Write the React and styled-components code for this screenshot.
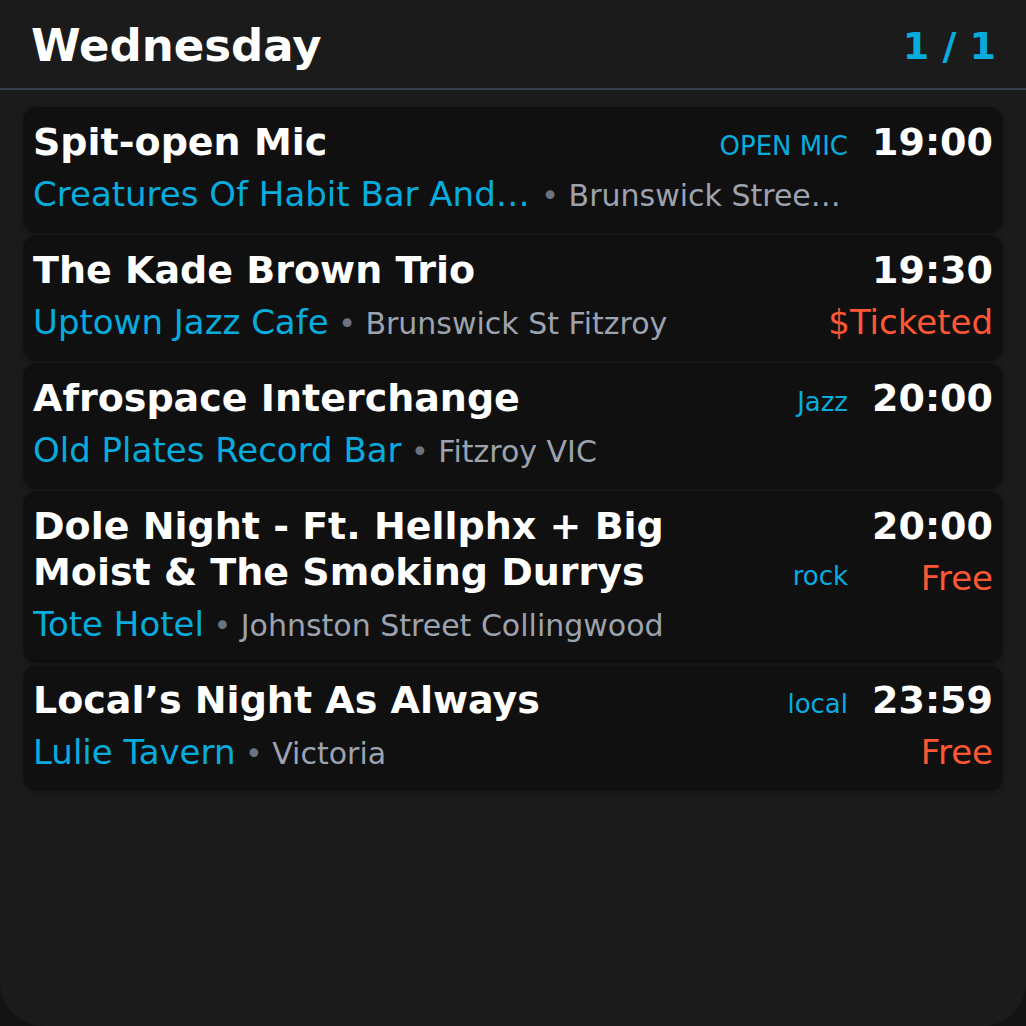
import React from 'react'
import styled, {createGlobalStyle} from "styled-components"

const events = [
    {title: "Spit-open Mic", tag: "OPEN MIC", time: "19:00", venue: "Creatures Of Habit Bar And Kitchen", place: "Brunswick Street Fitzroy"},
    {title: "The Kade Brown Trio", time: "19:30", price: "$Ticketed", venue: "Uptown Jazz Cafe", place: "Brunswick St Fitzroy"},
    {title: "Afrospace Interchange", tag: "Jazz", time: "20:00", venue: "Old Plates Record Bar", place: "Fitzroy VIC"},
    {title: "Dole Night - Ft. Hellphx + Big Moist & The Smoking Durrys", tag: "rock", time: "20:00", price: "Free", venue: "Tote Hotel", place: "Johnston Street Collingwood"},
    {title: "Local’s Night As Always", tag: "local", time: "23:59", price: "Free", venue: "Lulie Tavern", place: "Victoria"},
]

export default function App() {
    return (
        <>
            <GlobalStyle/>
            <Screen>
                <Header>
                    <Day>Wednesday</Day>
                    <Count>1 / 1</Count>
                </Header>
                <List>
                    {events.map((e, i) => (
                        <Card key={i}>
                            <Main>
                                <TitleRow>
                                    <Title>{e.title}</Title>
                                    {e.tag ? <Tag>{e.tag}</Tag> : null}
                                </TitleRow>
                                <VenueLine>
                                    <Venue>{e.venue}</Venue>
                                    <Place>
                                        <Dot>{"\u00a0•\u00a0"}</Dot>{e.place}
                                    </Place>
                                </VenueLine>
                            </Main>
                            <TimeCol>
                                <Time>{e.time}</Time>
                                {e.price ? <Price>{e.price}</Price> : null}
                            </TimeCol>
                        </Card>
                    ))}
                </List>
            </Screen>
        </>
    )
}

//---------------------------STYLES-------------------------------------------//

const GlobalStyle = createGlobalStyle`
    html, body {
        margin: 0;
        padding: 0;
        background: #131313;
    }
    body {
        font-family: "DejaVu Sans", "Liberation Sans", sans-serif;
    }
`

const Screen = styled.div`
    width: 1026px;
    height: 1026px;
    box-sizing: border-box;
    background: #1b1b1b;
    border-radius: 0 0 44px 44px;
    overflow: hidden;
`

const Header = styled.div`
    display: flex;
    align-items: center;
    justify-content: space-between;
    padding: 19px 30px 16px 31px;
    border-bottom: 2px solid #383e4a;
`

const Day = styled.h1`
    margin: 0;
    font-size: 45px;
    font-weight: bold;
    color: #ffffff;
`

const Count = styled.div`
    font-size: 38px;
    font-weight: bold;
    color: #07acdf;
`

const List = styled.div`
    display: flex;
    flex-direction: column;
    gap: 2px;
    padding: 17px 23px;
`

const Card = styled.div`
    display: flex;
    gap: 24px;
    padding: 12px 10px 15px 10px;
    background: #101010;
    border-radius: 14px;
    box-shadow: 0 2px 6px rgba(0, 0, 0, 0.25);
`

const Main = styled.div`
    flex: 1;
    min-width: 0;
    display: flex;
    flex-direction: column;
    gap: 7px;
`

const TitleRow = styled.div`
    display: flex;
    align-items: last baseline;
    gap: 16px;
`

const Title = styled.div`
    flex: 1;
    font-size: 38px;
    line-height: 46px;
    font-weight: bold;
    color: #ffffff;
`

const Tag = styled.div`
    flex: none;
    font-size: 26px;
    color: #07acdf;
`

const VenueLine = styled.div`
    display: flex;
    align-items: baseline;
    min-width: 0;
    white-space: nowrap;
    line-height: 44px;
`

const Venue = styled.span`
    max-width: 61.2%;
    flex: none;
    overflow: hidden;
    text-overflow: ellipsis;
    font-size: 34px;
    color: #07acdf;
`

const Place = styled.span`
    flex: 1;
    min-width: 0;
    overflow: hidden;
    text-overflow: ellipsis;
    font-size: 30px;
    color: #9ca3af;
`

const Dot = styled.span`
    color: #6b7280;
`

const TimeCol = styled.div`
    flex: none;
    display: flex;
    flex-direction: column;
    align-items: flex-end;
    gap: 7px;
`

const Time = styled.div`
    font-size: 38px;
    line-height: 46px;
    font-weight: bold;
    color: #ffffff;
`

const Price = styled.div`
    font-size: 34px;
    line-height: 44px;
    color: #ff5733;
`
